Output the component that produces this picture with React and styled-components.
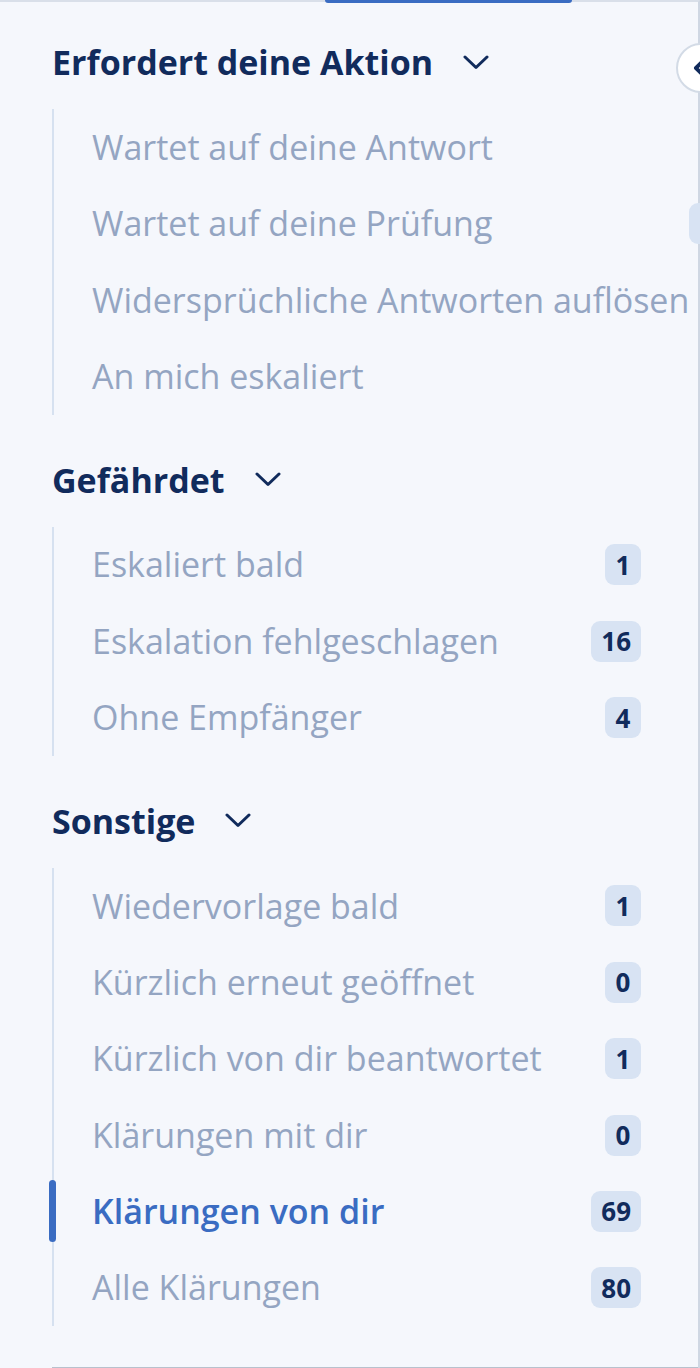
import React from "react";
import styled, { createGlobalStyle } from "styled-components";

const sections = [
  {
    title: "Erfordert deine Aktion",
    wide: true,
    items: [
      { label: "Wartet auf deine Antwort" },
      { label: "Wartet auf deine Prüfung", count: 2 },
      { label: "Widersprüchliche Antworten auflösen" },
      { label: "An mich eskaliert" },
    ],
  },
  {
    title: "Gefährdet",
    items: [
      { label: "Eskaliert bald", count: 1 },
      { label: "Eskalation fehlgeschlagen", count: 16 },
      { label: "Ohne Empfänger", count: 4 },
    ],
  },
  {
    title: "Sonstige",
    items: [
      { label: "Wiedervorlage bald", count: 1 },
      { label: "Kürzlich erneut geöffnet", count: 0 },
      { label: "Kürzlich von dir beantwortet", count: 1 },
      { label: "Klärungen mit dir", count: 0 },
      { label: "Klärungen von dir", count: 69, active: true },
      { label: "Alle Klärungen", count: 80 },
    ],
  },
];

export default function App() {
  return (
    <>
      <GlobalStyle />
      <Page>
        <Sidebar>
          {sections.map((section) => (
            <Section key={section.title}>
              <SectionHeader>
                {section.title}
                <svg width="26" height="15" viewBox="0 0 26 15">
                  <polyline points="2,2 13,12.5 24,2" fill="none" stroke="currentColor" strokeWidth="3" strokeLinecap="round" strokeLinejoin="round" />
                </svg>
              </SectionHeader>
              <ItemList $wide={section.wide}>
                {section.items.map((item) => (
                  <Row key={item.label} $active={item.active}>
                    <Label>{item.label}</Label>
                    {item.count !== undefined && <Badge>{item.count}</Badge>}
                  </Row>
                ))}
              </ItemList>
            </Section>
          ))}
          <Footer />
        </Sidebar>
        {/* active tab marker on the top edge */}
        <TabMarker />
        <ToggleButton>
          <svg width="14" height="18" viewBox="0 0 14 18">
            <polyline points="11,2 4,9 11,16" fill="none" stroke="currentColor" strokeWidth="4" strokeLinecap="round" strokeLinejoin="round" />
          </svg>
        </ToggleButton>
      </Page>
    </>
  );
}

const GlobalStyle = createGlobalStyle`
  body {
    margin: 0;
    background: #f5f7fc;
    font-family: "Open Sans", "Noto Sans", sans-serif;
  }
`;

const Page = styled.div`
  position: relative;
  width: 700px;
  height: 1368px;
  overflow: hidden;
`;

const Sidebar = styled.nav`
  box-sizing: border-box;
  width: 700px;
  height: 1368px;
  display: flex;
  flex-direction: column;
  padding: 36px 0 0 52px;
  border-top: 2px solid #d9dfe9;
  border-right: 2px solid #cfd7e3;
  background: #f5f7fc;
`;

const Section = styled.section`
  margin-bottom: 41px;
`;

const SectionHeader = styled.h2`
  margin: 0;
  height: 48px;
  display: flex;
  align-items: center;
  gap: 30px;
  font-size: 34px;
  font-weight: 700;
  color: #112b5c;
  white-space: nowrap;
`;

const ItemList = styled.ul`
  list-style: none;
  margin: 23px 0 0;
  padding: 0;
  border-left: 2px solid #d6e1f0;
  display: grid;
  grid-template-columns: ${(p) => (p.$wide ? "max-content max-content" : "1fr auto")};
  grid-auto-rows: 76.4px;
`;

const Row = styled.li`
  position: relative;
  grid-column: 1 / -1;
  display: grid;
  grid-template-columns: subgrid;
  align-items: center;
  padding: 0 57px 0 38px;
  color: ${(p) => (p.$active ? "#3a6cc2" : "#94a5c2")};
  font-weight: ${(p) => (p.$active ? 600 : 400)};

  &::before {
    content: "";
    display: ${(p) => (p.$active ? "block" : "none")};
    position: absolute;
    left: -5px;
    top: 7px;
    width: 7px;
    height: 62px;
    border-radius: 4px;
    background: #3a6cc2;
  }
`;

const Label = styled.span`
  font-size: 34px;
  line-height: 1.2;
  white-space: nowrap;
`;

const Badge = styled.span`
  justify-self: end;
  box-sizing: border-box;
  min-width: 36px;
  height: 41px;
  padding: 0 10px;
  border-radius: 9px;
  background: #d8e3f3;
  color: #112b5c;
  font-size: 26px;
  font-weight: 700;
  display: flex;
  align-items: center;
  justify-content: center;
`;

const Footer = styled.div`
  margin-top: auto;
  border-top: 2px solid #b8c1cd;
`;

const TabMarker = styled.div`
  position: absolute;
  top: 0;
  left: 325px;
  width: 247px;
  height: 3px;
  border-radius: 0 0 3px 3px;
  background: #3a6cc2;
`;

const ToggleButton = styled.button`
  position: absolute;
  top: 43px;
  left: 676px;
  box-sizing: border-box;
  width: 50px;
  height: 50px;
  padding: 0 0 0 14px;
  border-radius: 50%;
  border: 2px solid #d3dbe6;
  background: #ffffff;
  color: #112b5c;
  display: flex;
  align-items: center;
`;
